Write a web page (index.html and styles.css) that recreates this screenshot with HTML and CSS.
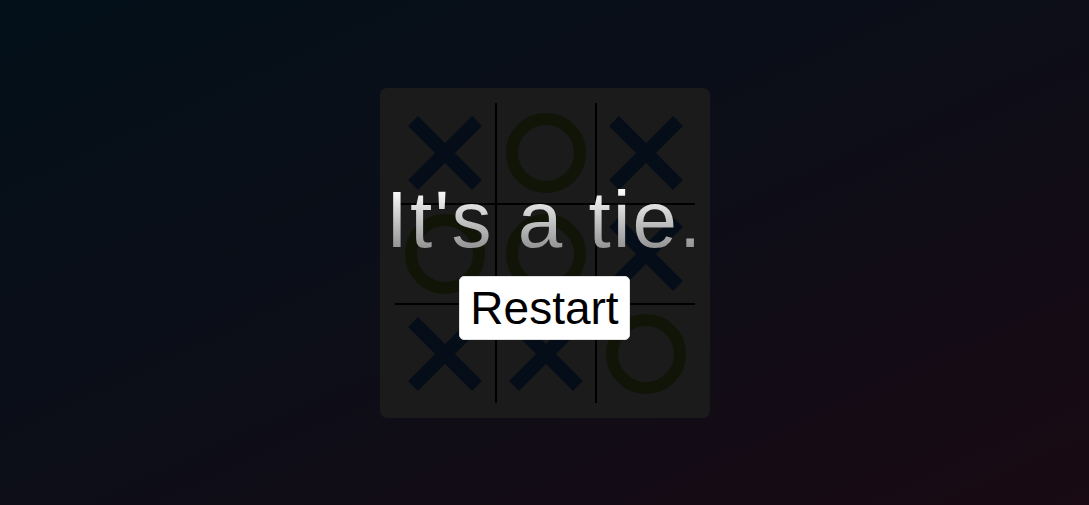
FILE: index.html
```html
<!DOCTYPE html>
<html lang="en">
<head>
<meta charset="utf-8">
<title>Tic Tac Toe</title>
<link rel="stylesheet" href="styles.css">
</head>
<body>
<main class="stage">
  <div class="panel">
    <div class="board">
      <div class="cell"><svg class="x" viewBox="0 0 74 74"><path d="M5 5 L69 69 M69 5 L5 69"/></svg></div>
      <div class="cell"><svg class="o" viewBox="0 0 80 80"><circle cx="40" cy="40" r="34"/></svg></div>
      <div class="cell"><svg class="x" viewBox="0 0 74 74"><path d="M5 5 L69 69 M69 5 L5 69"/></svg></div>
      <div class="cell"><svg class="o" viewBox="0 0 80 80"><circle cx="40" cy="40" r="34"/></svg></div>
      <div class="cell"><svg class="o" viewBox="0 0 80 80"><circle cx="40" cy="40" r="34"/></svg></div>
      <div class="cell"><svg class="x" viewBox="0 0 74 74"><path d="M5 5 L69 69 M69 5 L5 69"/></svg></div>
      <div class="cell"><svg class="x" viewBox="0 0 74 74"><path d="M5 5 L69 69 M69 5 L5 69"/></svg></div>
      <div class="cell"><svg class="x" viewBox="0 0 74 74"><path d="M5 5 L69 69 M69 5 L5 69"/></svg></div>
      <div class="cell"><svg class="o" viewBox="0 0 80 80"><circle cx="40" cy="40" r="34"/></svg></div>
    </div>
    <div class="result">
      <h1 class="message">It's a tie.</h1>
      <button class="restart" type="button">Restart</button>
    </div>
  </div>
</main>
</body>
</html>
```

FILE: styles.css
```css
html, body {
  margin: 0;
  height: 100%;
}

body {
  background: linear-gradient(to bottom right, #031019 0%, #0d0e18 50%, #190a13 100%);
  font-family: "Liberation Sans", Arial, sans-serif;
}

.stage {
  height: 100%;
  display: flex;
  align-items: center;
  justify-content: center;
}

.panel {
  position: relative;
  width: 330px;
  height: 330px;
  box-sizing: border-box;
  padding: 15px;
  background: #1b1b1b;
  border-radius: 7px;
}

.board {
  display: grid;
  grid-template-columns: repeat(3, 100px);
  grid-template-rows: repeat(3, 100px);
}

.cell {
  box-sizing: border-box;
  display: flex;
  align-items: center;
  justify-content: center;
}

.cell:nth-child(3n+2),
.cell:nth-child(3n) {
  border-left: 2px solid #000;
}

.cell:nth-child(n+4) {
  border-top: 2px solid #000;
}

.x {
  width: 74px;
  height: 74px;
}

.x path {
  stroke: #050e18;
  stroke-width: 14;
  fill: none;
}

.o {
  width: 80px;
  height: 80px;
}

.o circle {
  fill: none;
  stroke: #101507;
  stroke-width: 12;
}

.result {
  position: absolute;
  inset: 0;
  padding-top: 8px;
  display: flex;
  flex-direction: column;
  align-items: center;
  justify-content: center;
  gap: 10px;
}

.message {
  margin: 0;
  font-family: "Liberation Sans", Arial, sans-serif;
  font-weight: 400;
  font-size: 80px;
  letter-spacing: 2px;
  white-space: nowrap;
  background: linear-gradient(to bottom, #ffffff 15%, #8c8c8c 85%);
  -webkit-background-clip: text;
  background-clip: text;
  color: transparent;
}

.restart {
  font-family: "Liberation Sans", Arial, sans-serif;
  font-size: 46px;
  color: #000;
  background: #fff;
  border: 1px solid #e0e0e0;
  border-radius: 5px;
  padding: 4px 10px;
  line-height: normal;
}
```
